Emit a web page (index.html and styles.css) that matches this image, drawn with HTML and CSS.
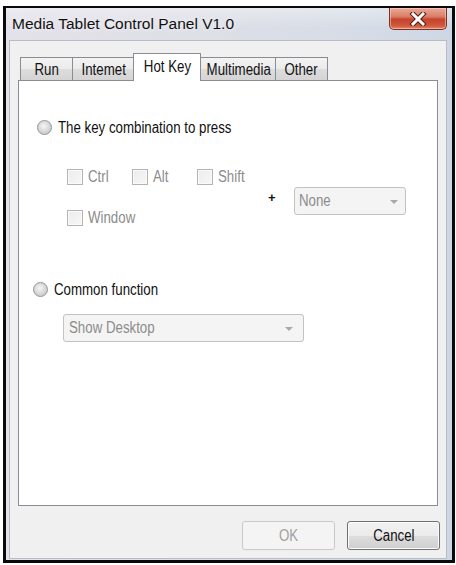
FILE: index.html
```html
<!DOCTYPE html>
<html>
<head>
<meta charset="utf-8">
<link rel="stylesheet" href="styles.css">
</head>
<body>
<div class="window">
  <div class="titlebar">
    <span class="title">Media Tablet Control Panel V1.0</span>
    <div class="close">
      <svg width="20" height="14" viewBox="0 0 20 14">
        <path d="M5 2 L15 12 M15 2 L5 12" stroke="#5a1a10" stroke-width="5" stroke-linecap="square"/>
        <path d="M5 2 L15 12 M15 2 L5 12" stroke="#ffffff" stroke-width="3" stroke-linecap="square"/>
      </svg>
    </div>
  </div>
  <div class="client">
    <div class="tabstrip">
      <div class="tab t-run"><span class="tx c">Run</span></div>
      <div class="tab t-internet"><span class="tx c">Intemet</span></div>
      <div class="tab t-hotkey sel"><span class="tx c">Hot Key</span></div>
      <div class="tab t-multi"><span class="tx c">Multimedia</span></div>
      <div class="tab t-other"><span class="tx c">Other</span></div>
    </div>
    <div class="panel">
      <div class="opt opt1">
        <span class="radio"></span>
        <span class="label tx">The key combination to press</span>
      </div>
      <div class="combo-area">
        <div class="checks">
          <div class="check-row">
            <div class="check"><span class="box"></span><span class="dis tx">Ctrl</span></div>
            <div class="check"><span class="box"></span><span class="dis tx">Alt</span></div>
            <div class="check"><span class="box"></span><span class="dis tx">Shift</span></div>
          </div>
          <div class="check-row">
            <div class="check"><span class="box"></span><span class="dis tx">Window</span></div>
          </div>
        </div>
        <span class="plus">+</span>
        <div class="select sel-none"><span class="tx">None</span><i class="arrow"></i></div>
      </div>
      <div class="opt opt2">
        <span class="radio"></span>
        <span class="label tx">Common function</span>
      </div>
      <div class="select sel-desktop"><span class="tx">Show Desktop</span><i class="arrow"></i></div>
    </div>
    <div class="buttons">
      <div class="btn btn-ok"><span class="tx c">OK</span></div>
      <div class="btn btn-cancel"><span class="tx c">Cancel</span></div>
    </div>
  </div>
</div>
</body>
</html>
```

FILE: styles.css
```css
html, body {
  margin: 0;
  padding: 0;
  background: #ffffff;
}

body {
  font-family: "Liberation Sans", Arial, sans-serif;
  font-size: 16px;
  color: #000;
}

/* narrow dialog font: Liberation Sans squeezed to the reference's condensed look */
.tx {
  display: inline-block;
  transform: scaleX(0.83);
  transform-origin: left center;
  white-space: nowrap;
}

.tx.c {
  transform-origin: center center;
}

.window {
  box-sizing: border-box;
  margin: 6px 0 0 3px;
  width: 452px;
  height: 557px;
  border: 3px solid #0a0a0a;
  border-top-width: 2px;
  background: linear-gradient(90deg, #e3e1e9 0%, #dedfe7 45%, #d6dce6 80%, #cdd7e4 100%);
  display: flex;
  flex-direction: column;
}

.titlebar {
  position: relative;
  height: 32px;
  padding: 7px 0 0 6px;
  box-sizing: border-box;
  background: linear-gradient(180deg, rgba(255,255,255,0.35) 0%, rgba(255,255,255,0) 60%);
}

.title {
  font-family: "Liberation Sans", Arial, sans-serif;
  font-size: 15.5px;
  line-height: 17px;
  color: #111;
  text-shadow: 0 0 6px rgba(255,255,255,0.9);
}

.close {
  position: absolute;
  top: 0;
  right: 5px;
  width: 58px;
  height: 22px;
  box-sizing: border-box;
  border: 1px solid #7b3024;
  border-top: none;
  border-radius: 0 0 5px 5px;
  background: linear-gradient(180deg, #e9a999 0%, #dc7f68 40%, #c5432c 55%, #cf5a3e 85%, #e08a6c 100%);
  display: flex;
  align-items: center;
  justify-content: center;
  box-shadow: inset 0 0 0 1px rgba(255,220,210,0.5);
}

.client {
  box-sizing: border-box;
  margin: 0 5px 1px 3px;
  width: 438px;
  height: 519px;
  border: 1px solid #b9bcc6;
  background: #f0f0f0;
  padding: 12px 8px 0 8px;
  display: flex;
  flex-direction: column;
}

/* Tabs */
.tabstrip {
  display: flex;
  align-items: flex-start;
  height: 27px;
  padding-left: 2px;
}

.tab {
  box-sizing: border-box;
  height: 23px;
  margin-top: 4px;
  border: 1px solid #898c95;
  border-bottom: none;
  background: linear-gradient(180deg, #f3f3f3 0%, #ebebeb 50%, #dddddd 51%, #d4d4d4 100%);
  text-align: center;
  line-height: 24px;
  color: #111;
  position: relative;
}

.t-run { width: 53px; }
.t-internet { width: 63px; margin-left: -1px; }
.t-multi { width: 77px; margin-left: -2px; }
.t-other { width: 53px; margin-left: -1px; }

.tab.sel {
  width: 68px;
  height: 28px;
  margin-top: 0;
  margin-left: -2px;
  margin-bottom: -1px;
  background: #ffffff;
  z-index: 2;
  line-height: 25px;
}

/* Panel */
.panel {
  box-sizing: border-box;
  height: 426px;
  border: 1px solid #898c95;
  background: #ffffff;
  display: flex;
  flex-direction: column;
  align-items: flex-start;
}

.opt {
  display: flex;
  align-items: center;
  gap: 6px;
  height: 15px;
}

.opt1 {
  margin: 39px 0 0 18px;
}

.opt2 {
  margin: 56px 0 0 14px;
}

.radio {
  width: 15px;
  height: 15px;
  box-sizing: border-box;
  border-radius: 50%;
  border: 1px solid #959595;
  background: radial-gradient(circle at 45% 40%, #f6f6f6 0%, #dedede 40%, #bdbdbd 100%);
  flex: none;
}

.label {
  line-height: 18px;
  color: #111;
}

.combo-area {
  display: flex;
  align-items: center;
  margin: 34px 0 0 48px;
}

.checks {
  display: flex;
  flex-direction: column;
  gap: 25px;
}

.check-row {
  display: flex;
  height: 16px;
}

.check {
  width: 65px;
  display: flex;
  align-items: center;
  gap: 5px;
}

.box {
  width: 16px;
  height: 16px;
  box-sizing: border-box;
  border: 1px solid #b4b4b4;
  background: linear-gradient(135deg, #ececec 0%, #f7f7f7 100%);
  box-shadow: inset 0 0 0 1px #fafafa;
  flex: none;
}

.dis {
  color: #8c8c8c;
  line-height: 18px;
}

.plus {
  margin-left: 6px;
  font-weight: bold;
  font-size: 13px;
  line-height: 14px;
  color: #111;
}

.select {
  box-sizing: border-box;
  height: 28px;
  border: 1px solid #c3c3c3;
  border-radius: 3px;
  background: #f4f4f4;
  display: flex;
  align-items: center;
  justify-content: space-between;
  padding: 0 7px 0 4px;
  color: #8c8c8c;
}

.select .tx {
  line-height: 18px;
}

.sel-none {
  width: 112px;
  margin: 7px 0 0 18px;
}

.sel-desktop {
  width: 241px;
  margin: 17px 0 0 44px;
  padding-left: 5px;
  padding-right: 10px;
}

.arrow {
  width: 0;
  height: 0;
  border-left: 4px solid transparent;
  border-right: 4px solid transparent;
  border-top: 4px solid #a9a9a9;
  margin-top: 1px;
}

/* Buttons */
.buttons {
  display: flex;
  justify-content: flex-end;
  gap: 12px;
  margin: 15px -2px 0 0;
}

.btn {
  box-sizing: border-box;
  width: 93px;
  height: 29px;
  border-radius: 3px;
  text-align: center;
  line-height: 27px;
}

.btn-ok {
  border: 1px solid #c9c9c9;
  background: #f4f4f4;
  color: #a0a0a0;
}

.btn-cancel {
  border: 1px solid #707070;
  background: linear-gradient(180deg, #f2f2f2 0%, #ebebeb 50%, #dddddd 51%, #cfcfcf 100%);
  box-shadow: inset 0 0 0 1px #fbfbfb;
  color: #111;
}
```
